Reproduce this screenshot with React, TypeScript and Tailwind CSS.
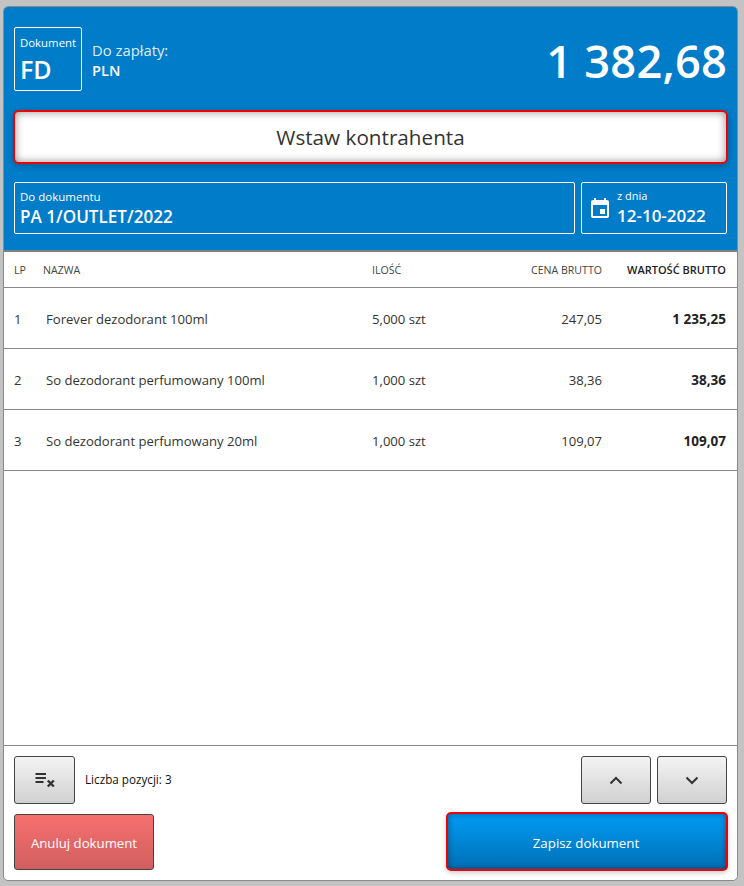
import React from "react";

const rows = [
  ["1", "Forever dezodorant 100ml", "5,000 szt", "247,05", "1 235,25"],
  ["2", "So dezodorant perfumowany 100ml", "1,000 szt", "38,36", "38,36"],
  ["3", "So dezodorant perfumowany 20ml", "1,000 szt", "109,07", "109,07"],
];

const grayBtn =
  "flex items-center justify-center h-[48px] rounded-[3px] border border-[#444] bg-gradient-to-b from-[#f4f4f4] to-[#d0d0d0] text-[#333]";

export default function App() {
  return (
    <div className="w-[744px] h-[886px] bg-[#c3c3c3] pt-[6px] pl-[3px] pr-[6px] pb-[5px] font-['Open_Sans','Noto_Sans',sans-serif]">
      <div className="h-[875px] w-[735px] flex flex-col bg-white border border-[#8a8a8a] rounded-[5px] overflow-hidden">
        <div className="h-[245px] shrink-0 bg-[#007cc8] border-b-2 border-[#808080] text-white pt-[20px] px-[10px]">
          <div className="flex items-center h-[64px]">
            <div className="w-[68px] h-[64px] border border-white rounded-[2px] pl-[5px] pt-[7px]">
              <div className="text-[11.4px] leading-[16px]">Dokument</div>
              <div className="text-[25px] leading-[30px] mt-[3px] font-semibold">FD</div>
            </div>
            <div className="ml-[10px] pt-[1px]">
              <div className="text-[14.8px] leading-[20px] text-[#dcecf7]">Do zapłaty:</div>
              <div className="text-[14.6px] leading-[20px] font-semibold">PLN</div>
            </div>
            <div className="ml-auto text-[45.2px] leading-[64px] font-semibold mt-[4px] tracking-[0.2px]">1 382,68</div>
          </div>
          <div className="-mx-[1px] mt-[19px] h-[54px] w-[715px] flex items-center justify-center rounded-[6px] border-2 border-[#f00000] bg-white pt-[2px] text-[20.7px] text-[#333] shadow-[inset_0_0_8px_rgba(0,0,0,0.45),0_2px_6px_rgba(0,0,0,0.25)]">
            Wstaw kontrahenta
          </div>
          <div className="flex gap-[6px] mt-[18px]">
            <div className="w-[561px] h-[52px] border border-white rounded-[2px] pl-[5px] pt-[6px]">
              <div className="text-[11.5px] leading-[16px]">Do dokumentu</div>
              <div className="text-[17.1px] leading-[24px] font-semibold">PA 1/OUTLET/2022</div>
            </div>
            <div className="w-[146px] h-[52px] border border-white rounded-[2px] flex items-center pl-[6px]">
              <svg width="24" height="24" viewBox="0 0 24 24" fill="white">
                <path d="M19 4h-1V2h-2v2H8V2H6v2H5c-1.1 0-2 .9-2 2v14c0 1.100.9 2 2 2h14c1.100 0 2-.9 2-2V6c0-1.100-.9-2-2-2zm0 16H5V9h14v11zm-7-7h5v5h-5v-5z" />
              </svg>
              <div className="ml-[5px]">
                <div className="text-[11px] leading-[16px]">z dnia</div>
                <div className="text-[17px] leading-[24px] font-semibold">12-10-2022</div>
              </div>
            </div>
          </div>
        </div>

        <div className="h-[36px] shrink-0 flex items-center border-b border-[#8a8a8a] text-[10.6px] text-[#444] pr-[11px] pt-[2px]">
          <div className="w-[39px] pl-[10px]">LP</div>
          <div className="w-[329px]">NAZWA</div>
          <div className="w-[100px]">ILOŚĆ</div>
          <div className="w-[130px] text-right">CENA BRUTTO</div>
          <div className="flex-1 text-right font-semibold text-[11px] text-[#222]">WARTOŚĆ BRUTTO</div>
        </div>

        {rows.map((r) => (
          <div key={r[0]} className="h-[61px] shrink-0 flex items-center border-b border-[#8a8a8a] text-[13.1px] text-[#333] pr-[11px] pt-[3px]">
            <div className="w-[42px] pl-[10px]">{r[0]}</div>
            <div className="w-[326px]">{r[1]}</div>
            <div className="w-[100px]">{r[2]}</div>
            <div className="w-[130px] text-right">{r[3]}</div>
            <div className="flex-1 text-right font-bold text-[13.5px] text-[#222]">{r[4]}</div>
          </div>
        ))}

        <div className="flex-1" />

        <div className="h-[135px] shrink-0 border-t border-[#8a8a8a] pl-[10px] pr-[10px] pt-[10px]">
          <div className="flex items-center">
            <div className={`${grayBtn} w-[61px]`}>
              <svg width="24" height="24" viewBox="0 0 24 24" fill="none" stroke="#333">
                <path d="M2.500 6h10.500M2.500 10h10.500M2.500 14h8" strokeWidth="1.800" />
                <path d="M14.800 12.500l6 6M20.800 12.500l-6 6" strokeWidth="2.400" />
              </svg>
            </div>
            <div className="ml-[10px] text-[11.7px] text-[#111]">Liczba pozycji: 3</div>
            <div className={`${grayBtn} w-[70px] ml-auto`}>
              <svg width="14" height="9" viewBox="0 0 14 9" fill="none" stroke="#333" strokeWidth="2"><path d="M1.500 7.500 7 2l5.500 5.500" /></svg>
            </div>
            <div className={`${grayBtn} w-[70px] ml-[6px]`}>
              <svg width="14" height="9" viewBox="0 0 14 9" fill="none" stroke="#333" strokeWidth="2"><path d="M1.500 1.500 7 7l5.500-5.500" /></svg>
            </div>
          </div>
          <div className="flex items-start justify-between mt-[8px] -mr-[1px]">
            <div className="w-[140px] h-[56px] mt-[2px] flex items-center justify-center rounded-[3px] border border-[#444] bg-gradient-to-b from-[#f76f6f] to-[#d15f5f] pt-[4px] text-white text-[13.2px]">
              Anuluj dokument
            </div>
            <div className="w-[282px] h-[59px] flex items-center justify-center rounded-[5px] border-2 border-[#f00000] bg-gradient-to-b from-[#009cf5] to-[#0070b5] pt-[5px] pr-[2px] text-white text-[13.3px] shadow-[inset_0_0_6px_rgba(0,0,0,0.4),0_2px_5px_rgba(0,0,0,0.2)]">
              Zapisz dokument
            </div>
          </div>
        </div>
      </div>
    </div>
  );
}
